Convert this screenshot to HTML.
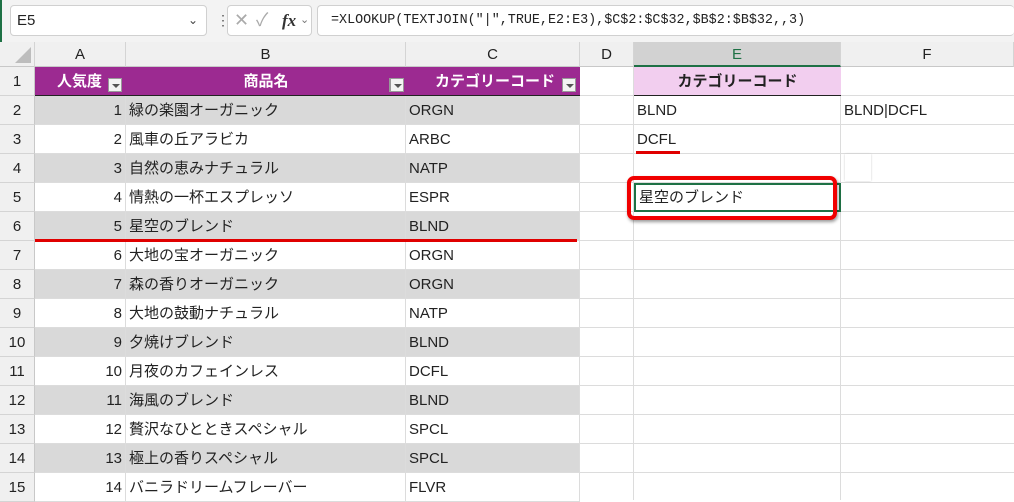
<!DOCTYPE html>
<html><head><meta charset="utf-8"><style>
body{margin:0;width:1014px;height:500px;overflow:hidden;background:#fff;font-family:"Liberation Sans","Noto Sans CJK JP",sans-serif;position:relative}
.a{position:absolute;box-sizing:border-box}
.top{left:0;top:0;width:1014px;height:42px;background:#f3f3f3}
.box{background:#fff;border:1px solid #d0d0d0;border-radius:4px}
.hdr{top:42px;height:25px;background:#f0f0f0;border-right:1px solid #d4d4d4;border-bottom:1px solid #c8c8c8;text-align:center;font-size:15px;line-height:25px;color:#222}
.rh{left:0;width:35px;background:#f0f0f0;border-right:1px solid #c8c8c8;border-bottom:1px solid #d4d4d4;text-align:center;font-size:15px;color:#222;height:29px;line-height:29px}
.c{height:29px;line-height:29px;font-size:15px;color:#222;border-right:1px solid #dcdcdc;border-bottom:1px solid #dcdcdc;white-space:nowrap;overflow:hidden}
.g{background:#d9d9d9}
.num{text-align:right;padding-right:3px}
.txt{padding-left:3px}
.dd{width:14px;height:14px;background:#f3f3f3;border:1px solid #999;}
.dd:after{content:"";position:absolute;left:3px;top:5px;border-left:4px solid transparent;border-right:4px solid transparent;border-top:4px solid #555}
</style></head><body>
<div class="a top"></div>
<div class="a" style="left:0;top:0;width:2px;height:42px;background:#1e7145"></div>
<div class="a box" style="left:10px;top:5px;width:197px;height:31px;font-size:15px;line-height:29px;padding-left:6px;color:#222">E5<span style="position:absolute;right:8px;top:0;font-size:12px;color:#444">&#8964;</span></div>
<div class="a" style="left:216px;top:11px;font-size:14px;color:#555;line-height:18px">&#8942;</div>
<div class="a box" style="left:227px;top:5px;width:85px;height:31px;color:#aaa;font-size:18px;line-height:29px">
<span style="position:absolute;left:6px">&#x2715;</span><span style="position:absolute;left:28px">&#x2713;</span><span style="position:absolute;left:54px;color:#333;font-family:'Liberation Serif',serif;font-style:italic;font-weight:bold;font-size:17px">fx</span><span style="position:absolute;left:72px;font-size:11px;color:#777">&#8964;</span></div>
<div class="a box" style="left:317px;top:5px;width:697px;height:31px;font-family:'Liberation Mono','Noto Sans CJK JP',monospace;font-size:13.4px;line-height:29px;padding-left:13px;color:#222;border-right:none">=XLOOKUP(TEXTJOIN("|",TRUE,E2:E3),$C$2:$C$32,$B$2:$B$32,,3)</div>

<div class="a hdr" style="left:0;width:35px;background:#f0f0f0"><div class="a" style="left:15px;top:5px;width:0;height:0;border-left:16px solid transparent;border-bottom:16px solid #bdbdbd"></div></div>
<div class="a hdr" style="left:35px;width:91px">A</div>
<div class="a hdr" style="left:126px;width:280px">B</div>
<div class="a hdr" style="left:406px;width:174px">C</div>
<div class="a hdr" style="left:580px;width:54px">D</div>
<div class="a hdr" style="left:634px;width:207px;background:#d2d2d2;border-bottom:2px solid #1e7145;color:#1e7145">E</div>
<div class="a hdr" style="left:841px;width:173px">F</div>

<div class="a rh" style="top:67px">1</div><div class="a rh" style="top:96px">2</div><div class="a rh" style="top:125px">3</div><div class="a rh" style="top:154px">4</div><div class="a rh" style="top:183px">5</div><div class="a rh" style="top:212px">6</div><div class="a rh" style="top:241px">7</div><div class="a rh" style="top:270px">8</div><div class="a rh" style="top:299px">9</div><div class="a rh" style="top:328px">10</div><div class="a rh" style="top:357px">11</div><div class="a rh" style="top:386px">12</div><div class="a rh" style="top:415px">13</div><div class="a rh" style="top:444px">14</div><div class="a rh" style="top:473px">15</div>

<div class="a" style="left:580px;top:67px;width:434px;height:433px;background-image:linear-gradient(#dcdcdc 1px,transparent 1px);background-size:100% 29px;background-position:0 28px"></div>
<div class="a" style="left:633px;top:67px;width:1px;height:433px;background:#dcdcdc"></div>
<div class="a" style="left:840px;top:67px;width:1px;height:433px;background:#dcdcdc"></div>

<div class="a" style="left:35px;top:67px;width:545px;height:29px;background:#9c2a91;border-bottom:1px solid #222"></div>
<div class="a" style="left:35px;top:67px;width:91px;height:29px;color:#fff;font-weight:bold;font-size:15px;line-height:29px;text-align:right;padding-right:24px">人気度</div>
<div class="a dd" style="left:108px;top:78px"></div>
<div class="a" style="left:126px;top:67px;width:280px;height:29px;color:#fff;font-weight:bold;font-size:15px;line-height:29px;text-align:center">商品名</div>
<div class="a dd" style="left:389px;top:78px"></div>
<div class="a" style="left:406px;top:67px;width:174px;height:29px;color:#fff;font-weight:bold;font-size:15px;line-height:29px;text-align:center;padding-left:4px">カテゴリーコード</div>
<div class="a dd" style="left:562px;top:78px"></div>
<div class="a dd" style="left:390px;top:78px"></div>
<div class="a" style="left:634px;top:67px;width:207px;height:29px;background:#f2ceef;border-bottom:1px solid #222;font-weight:bold;font-size:15px;line-height:29px;text-align:center;color:#222">カテゴリーコード</div>

<div class="a c g num" style="left:35px;top:96px;width:91px">1</div><div class="a c g txt" style="left:126px;top:96px;width:280px">緑の楽園オーガニック</div><div class="a c g txt" style="left:406px;top:96px;width:174px">ORGN</div>
<div class="a c num" style="left:35px;top:125px;width:91px">2</div><div class="a c txt" style="left:126px;top:125px;width:280px">風車の丘アラビカ</div><div class="a c txt" style="left:406px;top:125px;width:174px">ARBC</div>
<div class="a c g num" style="left:35px;top:154px;width:91px">3</div><div class="a c g txt" style="left:126px;top:154px;width:280px">自然の恵みナチュラル</div><div class="a c g txt" style="left:406px;top:154px;width:174px">NATP</div>
<div class="a c num" style="left:35px;top:183px;width:91px">4</div><div class="a c txt" style="left:126px;top:183px;width:280px">情熱の一杯エスプレッソ</div><div class="a c txt" style="left:406px;top:183px;width:174px">ESPR</div>
<div class="a c g num" style="left:35px;top:212px;width:91px">5</div><div class="a c g txt" style="left:126px;top:212px;width:280px">星空のブレンド</div><div class="a c g txt" style="left:406px;top:212px;width:174px">BLND</div>
<div class="a c num" style="left:35px;top:241px;width:91px">6</div><div class="a c txt" style="left:126px;top:241px;width:280px">大地の宝オーガニック</div><div class="a c txt" style="left:406px;top:241px;width:174px">ORGN</div>
<div class="a c g num" style="left:35px;top:270px;width:91px">7</div><div class="a c g txt" style="left:126px;top:270px;width:280px">森の香りオーガニック</div><div class="a c g txt" style="left:406px;top:270px;width:174px">ORGN</div>
<div class="a c num" style="left:35px;top:299px;width:91px">8</div><div class="a c txt" style="left:126px;top:299px;width:280px">大地の鼓動ナチュラル</div><div class="a c txt" style="left:406px;top:299px;width:174px">NATP</div>
<div class="a c g num" style="left:35px;top:328px;width:91px">9</div><div class="a c g txt" style="left:126px;top:328px;width:280px">夕焼けブレンド</div><div class="a c g txt" style="left:406px;top:328px;width:174px">BLND</div>
<div class="a c num" style="left:35px;top:357px;width:91px">10</div><div class="a c txt" style="left:126px;top:357px;width:280px">月夜のカフェインレス</div><div class="a c txt" style="left:406px;top:357px;width:174px">DCFL</div>
<div class="a c g num" style="left:35px;top:386px;width:91px">11</div><div class="a c g txt" style="left:126px;top:386px;width:280px">海風のブレンド</div><div class="a c g txt" style="left:406px;top:386px;width:174px">BLND</div>
<div class="a c num" style="left:35px;top:415px;width:91px">12</div><div class="a c txt" style="left:126px;top:415px;width:280px">贅沢なひとときスペシャル</div><div class="a c txt" style="left:406px;top:415px;width:174px">SPCL</div>
<div class="a c g num" style="left:35px;top:444px;width:91px">13</div><div class="a c g txt" style="left:126px;top:444px;width:280px">極上の香りスペシャル</div><div class="a c g txt" style="left:406px;top:444px;width:174px">SPCL</div>
<div class="a c num" style="left:35px;top:473px;width:91px">14</div><div class="a c txt" style="left:126px;top:473px;width:280px">バニラドリームフレーバー</div><div class="a c txt" style="left:406px;top:473px;width:174px">FLVR</div>

<div class="a c txt" style="left:634px;top:96px;width:207px;border:none">BLND</div>
<div class="a c txt" style="left:841px;top:96px;width:173px;border:none">BLND|DCFL</div>
<div class="a c txt" style="left:634px;top:125px;width:207px;border:none">DCFL</div>
<div class="a" style="left:845px;top:154px;width:26px;height:27px;background:#fff;box-shadow:0 0 2px #ccc"></div>
<div class="a c txt" style="left:634px;top:183px;width:207px;border:2px solid #1e7145;line-height:25px">星空のブレンド</div>

<div class="a" style="left:35px;top:239px;width:542px;height:3px;background:#e00000"></div>
<div class="a" style="left:636px;top:151px;width:44px;height:3px;background:#e00000"></div>
<div class="a" style="left:627px;top:176px;width:210px;height:44px;border:4px solid #f00000;border-radius:7px;box-shadow:1px 2px 3px rgba(0,0,0,.4)"></div>
</body></html>
